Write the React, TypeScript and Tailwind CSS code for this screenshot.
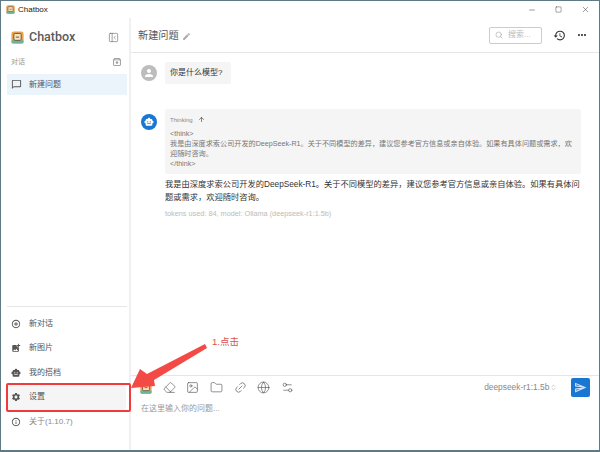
import React from "react";
import { Eraser, Folder, Globe, Image, Link2, Search, Settings2, ChevronsUpDown, ArrowUp, Minus, Square, X, PanelLeftClose } from "lucide-react";
import { MdAddCircleOutline, MdAddPhotoAlternate, MdChatBubbleOutline, MdEdit, MdHistory, MdInfoOutline, MdMoreHoriz, MdOutlineArchive, MdOutlineSend, MdPerson, MdSettings, MdSmartToy } from "react-icons/md";

const font = { fontFamily: '"Liberation Sans", "Noto Sans CJK SC", sans-serif' };

const Logo = ({ size }: { size: number }) => (
  <svg width={size} height={size} viewBox="0 0 16 16" className="shrink-0">
    <rect x="0.5" y="0.5" width="15" height="15" rx="3" fill="#e9a24c" />
    <rect x="0.5" y="11" width="15" height="4.5" rx="2" fill="#6fb39b" />
    <rect x="3.5" y="3" width="9" height="8.5" rx="1.5" fill="#f6e3bd" stroke="#6b5a45" strokeWidth="1.2" />
    <path d="M6 7.5h4" stroke="#6b5a45" strokeWidth="1.2" />
  </svg>
);

const SideRow = ({ icon, label, muted }: { icon: React.ReactNode; label: string; muted?: boolean }) => (
  <div className={`flex h-[24.5px] items-center gap-[7px] pl-[3px] text-[8px] ${muted ? "text-[#8a8a8a]" : "text-[#555]"}`}>
    <span className="flex w-[12px] justify-center text-[#555]">{icon}</span>
    <span>{label}</span>
  </div>
);

export default function App() {
  return (
    <div className="relative flex h-[452px] w-[600px] flex-col overflow-hidden border-x border-t border-b-2 border-[#5f7a85] bg-white" style={font}>
      {/* title bar */}
      <div className="flex h-[17px] shrink-0 items-center pl-[5px] text-[8px] text-[#222]">
        <Logo size={9} />
        <span className="ml-[3px]">Chatbox</span>
        <div className="ml-auto flex items-center gap-[19px] pr-[9px] text-[#333]">
          <Minus size={8} strokeWidth={1.5} />
          <Square size={7} strokeWidth={1.5} />
          <X size={9} strokeWidth={1.3} />
        </div>
      </div>

      <div className="flex min-h-0 flex-1">
        {/* sidebar */}
        <aside className="flex w-[130px] shrink-0 flex-col border-r-2 border-[#f0f0f0] pl-[6px] pr-[2px]">
          <div className="flex h-[38px] items-center pl-[4px] pr-[8px]">
            <Logo size={13} />
            <span className="ml-[5px] font-['Roboto'] text-[12.5px] font-medium text-[#5a5a5a]">Chatbox</span>
            <PanelLeftClose size={11} strokeWidth={1.2} className="ml-auto text-[#555]" />
          </div>
          <div className="flex h-[12px] items-center justify-between pl-[4px] pr-[5px] text-[7px] text-[#999]">
            <span>对话</span>
            <MdOutlineArchive size={10} className="text-[#888]" />
          </div>
          <div className="mt-[6px] flex h-[21px] items-center gap-[6px] bg-[#ebf3fb] pl-[4px] text-[8px] text-[#555]">
            <MdChatBubbleOutline size={11} />
            <span className="pl-[1px]">新建问题</span>
          </div>
          <div className="mt-auto border-t border-[#e6e6e6] pb-[16px] pt-[5px]">
            <SideRow icon={<MdAddCircleOutline size={10} />} label="新对话" />
            <SideRow icon={<MdAddPhotoAlternate size={10} />} label="新图片" />
            <SideRow icon={<MdSmartToy size={10} />} label="我的搭档" />
            <div className="mr-[1px] rounded-[2px] bg-[#f5f5f5]">
              <SideRow icon={<MdSettings size={10} />} label="设置" />
            </div>
            <SideRow icon={<MdInfoOutline size={10} />} label="关于(1.10.7)" muted />
          </div>
        </aside>

        {/* main */}
        <main className="flex min-w-0 flex-1 flex-col">
          <header className="flex h-[35px] shrink-0 items-center border-b border-[#e6e6e6] pl-[7px] pr-[11px]">
            <span className="pt-[2px] text-[10.2px] text-[#555]">新建问题</span>
            <MdEdit size={9} className="ml-[3px] mt-[2px] text-[#aaa]" />
            <div className="ml-auto flex h-[17px] w-[53px] items-center gap-[5px] rounded-[2px] border border-[#ccc] pl-[5px] text-[8px] text-[#bbb]">
              <Search size={8} className="text-[#aaa]" />
              <span>搜索...</span>
            </div>
            <MdHistory size={13} className="ml-[11px] text-[#333]" />
            <MdMoreHoriz size={12} className="ml-[10px] text-[#333]" />
          </header>

          <div className="flex-1 pl-[10px] pr-[18px] pt-[9px]">
            <div className="flex gap-[8px]">
              <div className="mt-[3px] flex h-[16px] w-[16px] items-center justify-center rounded-full bg-[#bdbdbd] text-white">
                <MdPerson size={12} />
              </div>
              <div className="flex h-[22px] w-[66px] items-center pl-[5px] rounded-[2px] bg-[#f5f5f5] text-[8px] text-[#333]">你是什么模型?</div>
            </div>

            <div className="mt-[25px] flex gap-[8px]">
              <div className="mt-[5px] flex h-[16px] w-[16px] shrink-0 items-center justify-center rounded-full bg-[#1976d2] text-white">
                <MdSmartToy size={10} />
              </div>
              <div className="min-w-0 flex-1">
                <div className="h-[65px] rounded-[2px] bg-[#f5f5f5] px-[5px] pt-[6px] text-[7.15px] leading-[10px] text-[#777]">
                  <div className="flex h-[9px] items-center gap-[5px] text-[6px] text-[#888]">
                    Thinking <ArrowUp size={7} className="text-[#333]" />
                  </div>
                  <div className="mt-[5px]">&lt;think&gt;</div>
                  <div>我是由深度求索公司开发的DeepSeek-R1。关于不同模型的差异，建议您参考官方信息或亲自体验。如果有具体问题或需求，欢迎随时咨询。</div>
                  <div>&lt;/think&gt;</div>
                </div>
                <div className="mt-[4px] whitespace-nowrap text-[8.25px] leading-[13px] text-[#333]">
                  我是由深度求索公司开发的DeepSeek-R1。关于不同模型的差异，建议您参考官方信息或亲自体验。如果有具体问<br />题或需求，欢迎随时咨询。
                </div>
                <div className="mt-[5px] text-[7.3px] text-[#bbb]">tokens used: 84, model: Ollama (deepseek-r1:1.5b)</div>
              </div>
            </div>
          </div>

          <footer className="h-[75px] shrink-0 border-t border-[#e6e6e6] pl-[9px] pr-[9px] pt-[2px]">
            <div className="flex h-[19px] items-center gap-[10.7px] text-[#555]">
              <Logo size={12} />
              <Eraser size={13} strokeWidth={1.2} />
              <Image size={13} strokeWidth={1.2} />
              <Folder size={13} strokeWidth={1.2} />
              <Link2 size={13} strokeWidth={1.2} className="-rotate-45" />
              <Globe size={13} strokeWidth={1.2} />
              <Settings2 size={13} strokeWidth={1.2} />
              <div className="ml-auto flex items-center text-[8.4px] text-[#888]">
                deepseek-r1:1.5b
                <ChevronsUpDown size={7} className="ml-[1px] text-[#aaa]" />
              </div>
              <div className="ml-[3px] flex h-[19px] w-[19px] items-center justify-center rounded-[2px] bg-[#1976d2] text-[#cfe4fa]">
                <MdOutlineSend size={13} />
              </div>
            </div>
            <div className="ml-[1px] mt-[6px] text-[8px] text-[#999]">在这里输入你的问题...</div>
          </footer>
        </main>
      </div>

      {/* annotation over the screenshot */}
      <div className="absolute left-[5px] top-[382px] h-[29px] w-[125px] rounded-[2px] border-2 border-[#ee3b3b]" />
      <span className="absolute left-[211px] top-[334px] text-[9.5px] text-[#d9534f]">1.点击</span>
      <svg className="absolute left-0 top-0" width="600" height="452" viewBox="0 0 600 452">
        <path d="M130 387 L139 368 L146 373 L204 343 L206 347 L153 379 L154 385 Z" fill="#f34a45" />
      </svg>
    </div>
  );
}
